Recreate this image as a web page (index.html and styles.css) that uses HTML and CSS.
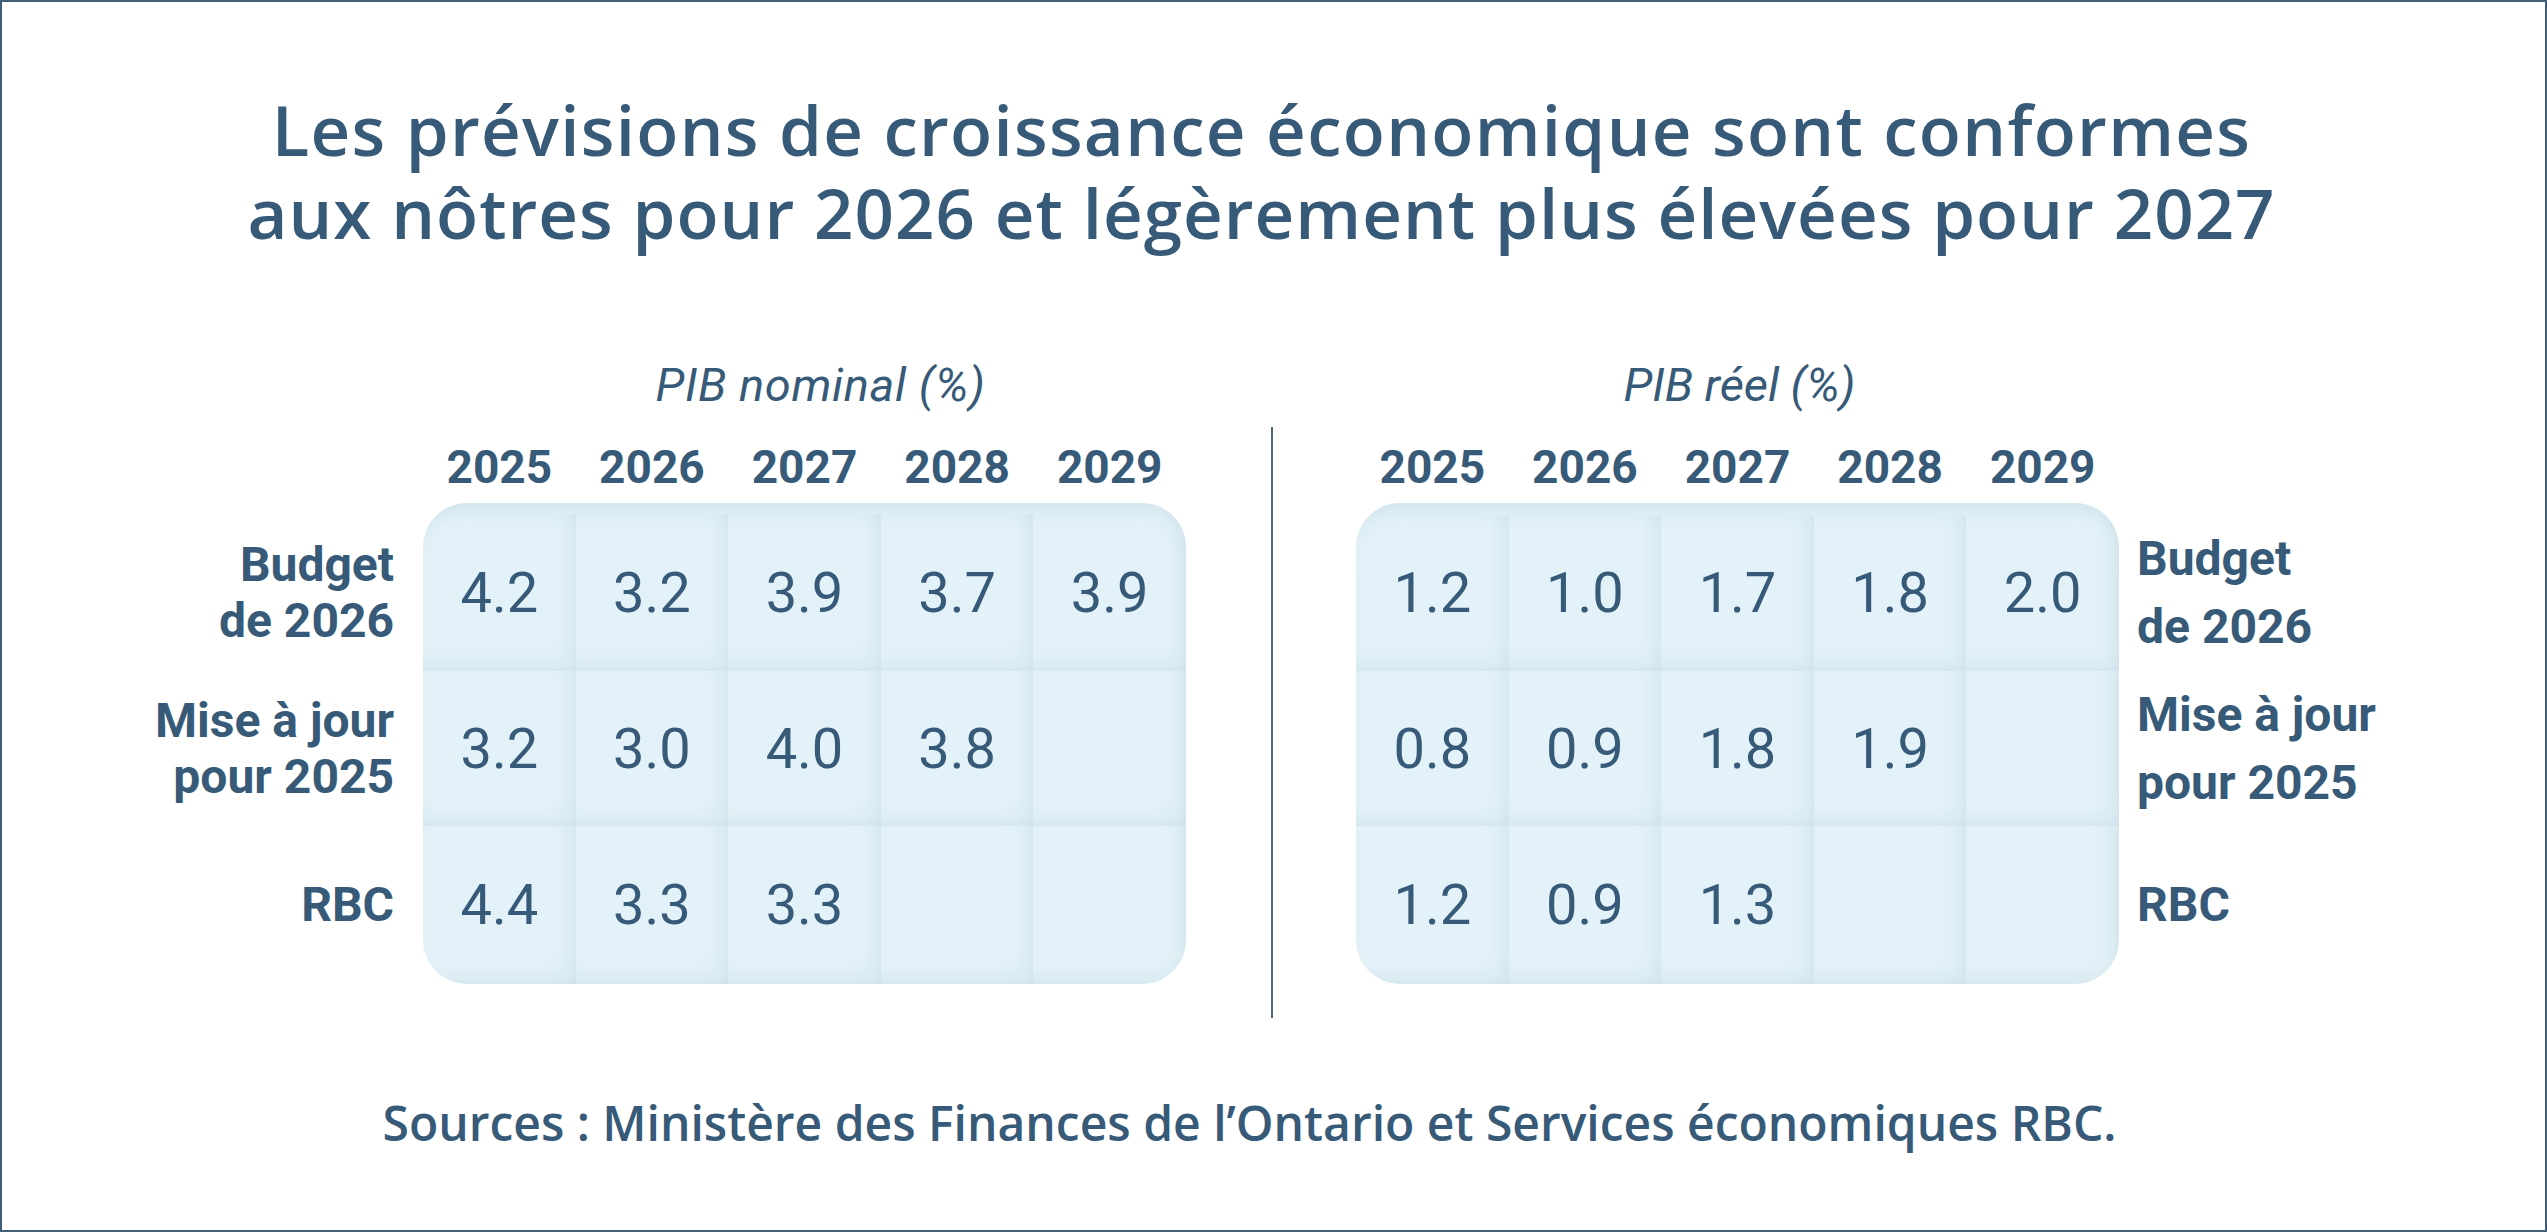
FILE: index.html
```html
<!DOCTYPE html>
<html lang="fr">
<head>
<meta charset="utf-8">
<title>Prévisions de croissance économique</title>
<link rel="stylesheet" href="styles.css">
</head>
<body>
<div class="frame">
  <h1 class="title"><span class="tline">Les prévisions de croissance économique sont conformes</span><span class="tline">aux nôtres pour 2026 et légèrement plus élevées pour 2027</span></h1>

  <div class="tables">
    <div class="tbl tbl-left">
      <div class="subtitle sub-left">PIB nominal (%)</div>
      <div class="years"><span>2025</span><span>2026</span><span>2027</span><span>2028</span><span>2029</span></div>
      <div class="labels labels-left">
        <div class="lab">Budget<br>de 2026</div>
        <div class="lab">Mise à jour<br>pour 2025</div>
        <div class="lab">RBC</div>
      </div>
      <div class="box">
        <div class="cell">4.2</div><div class="cell">3.2</div><div class="cell">3.9</div><div class="cell">3.7</div><div class="cell">3.9</div>
        <div class="cell">3.2</div><div class="cell">3.0</div><div class="cell">4.0</div><div class="cell">3.8</div><div class="cell"></div>
        <div class="cell">4.4</div><div class="cell">3.3</div><div class="cell">3.3</div><div class="cell"></div><div class="cell"></div>
      </div>
    </div>

    <div class="divider"></div>

    <div class="tbl tbl-right">
      <div class="subtitle sub-right">PIB réel (%)</div>
      <div class="years"><span>2025</span><span>2026</span><span>2027</span><span>2028</span><span>2029</span></div>
      <div class="box">
        <div class="cell">1.2</div><div class="cell">1.0</div><div class="cell">1.7</div><div class="cell">1.8</div><div class="cell">2.0</div>
        <div class="cell">0.8</div><div class="cell">0.9</div><div class="cell">1.8</div><div class="cell">1.9</div><div class="cell"></div>
        <div class="cell">1.2</div><div class="cell">0.9</div><div class="cell">1.3</div><div class="cell"></div><div class="cell"></div>
      </div>
      <div class="labels labels-right">
        <div class="lab">Budget<br>de 2026</div>
        <div class="lab">Mise à jour<br>pour 2025</div>
        <div class="lab">RBC</div>
      </div>
    </div>
  </div>

  <p class="source">Sources : Ministère des Finances de l’Ontario et Services économiques RBC.</p>
</div>
</body>
</html>
```

FILE: styles.css
```css
* { box-sizing: border-box; }

html, body {
  margin: 0;
  padding: 0;
  background: #ffffff;
}

.frame {
  width: 2547px;
  height: 1232px;
  border: 2px solid #3f5f7a;
  background: #ffffff;
  display: flex;
  flex-direction: column;
  align-items: center;
  color: #365a78;
  overflow: hidden;
}

.title {
  margin: 86px 0 0 -24px;
  display: flex;
  flex-direction: column;
  align-items: center;
  font-family: "Open Sans", "Noto Sans", sans-serif;
  font-weight: 600;
  font-size: 69px;
  letter-spacing: 1px;
}

.tline {
  display: block;
  height: 83px;
  line-height: 83px;
  white-space: nowrap;
}

.tline:first-child { letter-spacing: 1.3px; }

.tables {
  align-self: stretch;
  display: flex;
  align-items: flex-start;
  padding-left: 152px;
  margin-top: 104px;
}

.tbl {
  display: grid;
  grid-template-rows: 54px 28px 54px 9px auto;
  font-family: Roboto, "Liberation Sans", sans-serif;
}

.tbl-left {
  grid-template-columns: 240px 763px;
  column-gap: 29px;
}

.tbl-right {
  grid-template-columns: 763px 240px;
  column-gap: 18px;
}

.subtitle {
  grid-row: 1;
  font-style: italic;
  font-weight: 400;
  font-size: 47px;
  line-height: 54px;
  text-align: center;
  white-space: nowrap;
}

.sub-left { grid-column: 2; padding-left: 32px; letter-spacing: 0.6px; }
.sub-right { grid-column: 1; padding-left: 4px; }

.years {
  grid-row: 3;
  display: grid;
  grid-template-columns: repeat(5, 1fr);
  font-weight: 700;
  font-size: 46px;
  line-height: 54px;
  text-align: center;
}

.tbl-left .years { grid-column: 2; }
.tbl-right .years { grid-column: 1; }

.box {
  grid-row: 5;
  display: grid;
  grid-template-columns: repeat(5, 1fr);
  grid-template-rows: 156px 155px 158px;
  padding-top: 12px;
  background: #e3f2f8;
  border-radius: 44px;
  overflow: hidden;
  box-shadow: inset 0 18px 22px -16px rgba(150, 180, 198, 0.30);
}

.tbl-left .box { grid-column: 2; }
.tbl-right .box { grid-column: 1; }

.cell {
  display: flex;
  align-items: center;
  justify-content: center;
  font-weight: 400;
  font-size: 56px;
  box-shadow: inset -12px -12px 28px -16px rgba(135, 165, 185, 0.32);
}

.labels {
  grid-row: 5;
  display: grid;
  grid-template-rows: 156px 155px 158px;
  padding-top: 12px;
  font-weight: 700;
  font-size: 48px;
  white-space: nowrap;
}

.lab {
  display: flex;
  align-items: center;
}

.labels-left {
  grid-column: 1;
  line-height: 56px;
  text-align: right;
}

.labels-left .lab { justify-content: flex-end; }

.labels-right {
  grid-column: 2;
  line-height: 68px;
  text-align: left;
}

.divider {
  width: 2px;
  height: 591px;
  margin: 69px 83px 0 85px;
  background: #50697f;
  flex-shrink: 0;
}

.source {
  margin: 77px 0 0 -48px;
  font-family: "Open Sans", "Noto Sans", sans-serif;
  font-weight: 600;
  font-size: 48px;
  line-height: 55px;
  white-space: nowrap;
}
```
